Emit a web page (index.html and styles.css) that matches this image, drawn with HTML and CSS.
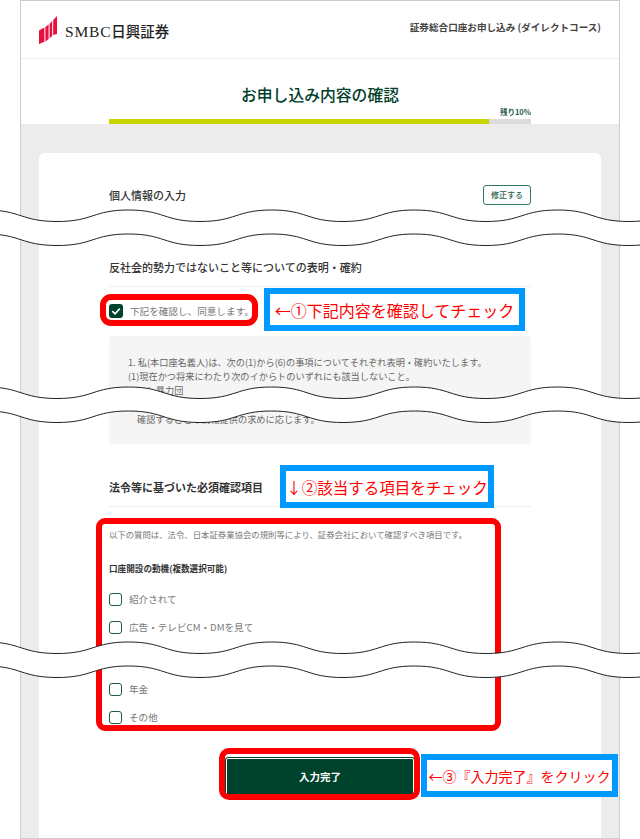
FILE: index.html
```html
<!DOCTYPE html>
<html lang="ja">
<head>
<meta charset="utf-8">
<title>お申し込み内容の確認</title>
<link rel="stylesheet" href="styles.css">
</head>
<body>
<div class="page">
  <div class="frame">
    <header class="site-header">
      <div class="logo">
        <svg class="logo-mark" viewBox="0 0 18 28" width="18" height="28" aria-hidden="true">
          <path fill="#e8103f" d="M0 14.5 L5.4 11.6 V25.8 L0 28 Z"/>
          <path fill="#e8103f" d="M6.4 11 L9.6 8.6 V23 L6.4 25.4 Z"/>
          <path fill="#e8103f" d="M10.6 8 L13.2 5 V20 L10.6 22.4 Z"/>
          <path fill="#e8103f" d="M14.2 4 L18 0 V18 L14.2 19 Z"/>
        </svg>
        <span class="logo-text"><span class="logo-latin">SMBC</span><span class="logo-cjk">日興証券</span></span>
      </div>
      <div class="course">証券総合口座お申し込み (ダイレクトコース)</div>
    </header>

    <section class="title-area">
      <h1 class="page-title">お申し込み内容の確認</h1>
      <div class="progress-wrap">
        <div class="progress-label">残り10%</div>
        <div class="progress"><div class="progress-fill"></div></div>
      </div>
    </section>

    <main class="main">
      <div class="card">
        <div class="row-personal">
          <h2 class="heading">個人情報の入力</h2>
          <button class="edit-btn" type="button">修正する</button>
        </div>

        <h2 class="heading heading-rule heading-second">反社会的勢力ではないこと等についての表明・確約</h2>

        <label class="check-row check-agree">
          <span class="box box-on">
            <svg viewBox="0 0 14 14" width="14" height="14" aria-hidden="true"><path d="M3.3 7.2 L6 9.8 L10.8 4.6" fill="none" stroke="#fff" stroke-width="1.6"/></svg>
          </span>
          <span class="check-label">下記を確認し、同意します。</span>
        </label>

        <div class="terms">
          <p class="terms-line">1. 私(本口座名義人)は、次の(1)から(6)の事項についてそれぞれ表明・確約いたします。</p>
          <p class="terms-line">(1)現在かつ将来にわたり次のイからトのいずれにも該当しないこと。</p>
          <p class="terms-line terms-item">イ. 暴力団</p>
          <p class="terms-line terms-last">確認することの情報提供の求めに応じます。</p>
        </div>

        <h2 class="heading heading-rule heading-third">法令等に基づいた必須確認項目</h2>

        <p class="note">以下の質問は、法令、日本証券業協会の規則等により、証券会社において確認すべき項目です。</p>
        <h3 class="sub-heading">口座開設の動機(複数選択可能)</h3>

        <div class="options">
          <label class="check-row"><span class="box"></span><span class="check-label">紹介されて</span></label>
          <label class="check-row"><span class="box"></span><span class="check-label">広告・テレビCM・DMを見て</span></label>
          <label class="check-row after-break"><span class="box"></span><span class="check-label">年金</span></label>
          <label class="check-row"><span class="box"></span><span class="check-label">その他</span></label>
        </div>

        <div class="submit-row"><button class="submit" type="button">入力完了</button></div>
      </div>
    </main>
  </div>

  <div class="outline outline-agree"></div>
  <div class="outline outline-options"></div>
  <div class="outline outline-submit"></div>

  <div class="callout callout-1">←①下記内容を確認してチェック</div>
  <div class="callout callout-2">↓②該当する項目をチェック</div>
  <div class="callout callout-3">←③『入力完了』をクリック</div>

  <svg class="wave wave-1" viewBox="0 0 640 38" width="640" height="38" aria-hidden="true">
    <path fill="#fff" d="M-14.5 1 C21 1 21 12.5 57 12.5 S93 1 128.5 1 S164 12.5 200 12.5 S236 1 271.5 1 S307 12.5 343 12.5 S379 1 414.5 1 S450 12.5 486 12.5 S522 1 557.5 1 S593 12.5 629 12.5 S665 1 700 1 V25 C665 25 665 36.5 629 36.5 S593 25 557.5 25 S522 36.5 486 36.5 S450 25 414.5 25 S379 36.5 343 36.5 S307 25 271.5 25 S236 36.5 200 36.5 S164 25 128.5 25 S93 36.5 57 36.5 S21 25 -14.5 25 Z"/>
    <path fill="none" stroke="#222" d="M-14.5 1 C21 1 21 12.5 57 12.5 S93 1 128.5 1 S164 12.5 200 12.5 S236 1 271.5 1 S307 12.5 343 12.5 S379 1 414.5 1 S450 12.5 486 12.5 S522 1 557.5 1 S593 12.5 629 12.5 S665 1 700 1"/>
    <path fill="none" stroke="#222" d="M-14.5 25 C21 25 21 36.5 57 36.5 S93 25 128.5 25 S164 36.5 200 36.5 S236 25 271.5 25 S307 36.5 343 36.5 S379 25 414.5 25 S450 36.5 486 36.5 S522 25 557.5 25 S593 36.5 629 36.5 S665 25 700 25"/>
  </svg>
  <svg class="wave wave-2" viewBox="0 0 640 38" width="640" height="38" aria-hidden="true">
    <path fill="#fff" d="M-14.5 1 C21 1 21 12.5 57 12.5 S93 1 128.5 1 S164 12.5 200 12.5 S236 1 271.5 1 S307 12.5 343 12.5 S379 1 414.5 1 S450 12.5 486 12.5 S522 1 557.5 1 S593 12.5 629 12.5 S665 1 700 1 V25 C665 25 665 36.5 629 36.5 S593 25 557.5 25 S522 36.5 486 36.5 S450 25 414.5 25 S379 36.5 343 36.5 S307 25 271.5 25 S236 36.5 200 36.5 S164 25 128.5 25 S93 36.5 57 36.5 S21 25 -14.5 25 Z"/>
    <path fill="none" stroke="#222" d="M-14.5 1 C21 1 21 12.5 57 12.5 S93 1 128.5 1 S164 12.5 200 12.5 S236 1 271.5 1 S307 12.5 343 12.5 S379 1 414.5 1 S450 12.5 486 12.5 S522 1 557.5 1 S593 12.5 629 12.5 S665 1 700 1"/>
    <path fill="none" stroke="#222" d="M-14.5 25 C21 25 21 36.5 57 36.5 S93 25 128.5 25 S164 36.5 200 36.5 S236 25 271.5 25 S307 36.5 343 36.5 S379 25 414.5 25 S450 36.5 486 36.5 S522 25 557.5 25 S593 36.5 629 36.5 S665 25 700 25"/>
  </svg>
  <svg class="wave wave-3" viewBox="0 0 640 38" width="640" height="38" aria-hidden="true">
    <path fill="#fff" d="M-14.5 1 C21 1 21 12.5 57 12.5 S93 1 128.5 1 S164 12.5 200 12.5 S236 1 271.5 1 S307 12.5 343 12.5 S379 1 414.5 1 S450 12.5 486 12.5 S522 1 557.5 1 S593 12.5 629 12.5 S665 1 700 1 V25 C665 25 665 36.5 629 36.5 S593 25 557.5 25 S522 36.5 486 36.5 S450 25 414.5 25 S379 36.5 343 36.5 S307 25 271.5 25 S236 36.5 200 36.5 S164 25 128.5 25 S93 36.5 57 36.5 S21 25 -14.5 25 Z"/>
    <path fill="none" stroke="#222" d="M-14.5 1 C21 1 21 12.5 57 12.5 S93 1 128.5 1 S164 12.5 200 12.5 S236 1 271.5 1 S307 12.5 343 12.5 S379 1 414.5 1 S450 12.5 486 12.5 S522 1 557.5 1 S593 12.5 629 12.5 S665 1 700 1"/>
    <path fill="none" stroke="#222" d="M-14.5 25 C21 25 21 36.5 57 36.5 S93 25 128.5 25 S164 36.5 200 36.5 S236 25 271.5 25 S307 36.5 343 36.5 S379 25 414.5 25 S450 36.5 486 36.5 S522 25 557.5 25 S593 36.5 629 36.5 S665 25 700 25"/>
  </svg>
</div>
</body>
</html>
```
FILE: styles.css
```css
* { box-sizing: border-box; }
html, body { margin: 0; padding: 0; background: #fff; }
body {
  font-family: "Noto Sans CJK JP", "Noto Sans", sans-serif;
  color: #333;
  overflow: hidden;
}
h1, h2, h3, p { margin: 0; }

.page { position: relative; width: 640px; height: 839px; overflow: hidden; }

.frame {
  width: 600px;
  height: 839px;
  margin-left: 20px;
  border: 1px solid #ccc;
  display: flex;
  flex-direction: column;
  background: #fff;
}

.site-header {
  height: 58px;
  flex: none;
  display: flex;
  align-items: center;
  justify-content: space-between;
  padding: 0 18px 0 18px;
  border-bottom: 1px solid #eee;
}
.logo { display: flex; align-items: center; gap: 8px; }
.logo-mark { display: block; }
.logo-text { display: block; font-size: 15px; line-height: 20px; color: #222; white-space: nowrap; margin-top: 4px; }
.logo-latin { font-family: "Liberation Serif", serif; letter-spacing: 0.8px; font-size: 15.5px; }
.logo-cjk { font-weight: 500; font-size: 14.5px; }
.course { font-size: 9.6px; font-weight: 700; color: #444; white-space: nowrap; margin-top: -6px; }

.title-area {
  position: relative;
  height: 65px;
  flex: none;
  padding-top: 25px;
}
.page-title {
  font-size: 15.8px;
  font-weight: 500;
  line-height: 22px;
  text-align: center;
  color: #004028;
}
.progress-wrap { position: absolute; left: 88px; right: 88px; bottom: 0; }
.progress-label { font-size: 7.5px; font-weight: 700; line-height: 10px; text-align: right; color: #2c5a48; margin-bottom: 2px; }
.progress { height: 5px; background: #dcdcdc; }
.progress-fill { width: 90%; height: 100%; background: #c8d400; }

.main {
  flex: 1;
  min-height: 0;
  background: #ececec;
  padding: 29px 18px 0 18px;
}
.card {
  height: 100%;
  background: #fff;
  border-radius: 6px 6px 0 0;
  padding: 32px 70px 0 70px;
}

.heading { font-size: 11px; font-weight: 500; line-height: 16px; color: #333; }
.row-personal { display: flex; align-items: center; justify-content: space-between; height: 20px; }
.edit-btn {
  width: 48px;
  height: 20px;
  padding: 0;
  background: #fff;
  border: 1px solid #2f7a66;
  border-radius: 3px;
  font: 500 8px/18px "Noto Sans CJK JP", sans-serif;
  color: #1f5f4c;
}
.heading-rule { border-bottom: 1px solid #eee; }
.heading-second { margin-top: 54px; padding-bottom: 11px; }

.check-row { display: flex; align-items: center; gap: 7px; height: 14px; }
.box {
  display: block;
  flex: none;
  width: 13px;
  height: 13px;
  border: 1.5px solid #1c5a46;
  border-radius: 3px;
  background: #fff;
}
.box-on { border: 0; width: 14px; height: 14px; background: #00432c; }
.box-on svg { display: block; }
.check-label { font-size: 9.6px; line-height: 14px; color: #777; white-space: nowrap; }
.check-agree { margin-top: 17px; }

.terms {
  margin-top: 18px;
  height: 108px;
  background: #f5f5f5;
  border-radius: 3px;
  padding: 19px 19px 0 19px;
}
.terms-line { font-size: 9.2px; line-height: 14px; color: #666; white-space: nowrap; }
.terms-item { padding-left: 14px; }
.terms-last { margin-top: 15px; padding-left: 9px; }

.heading-third { margin-top: 35px; padding-bottom: 11px; font-weight: 700; }
.note { margin-top: 20px; font-size: 8.4px; line-height: 14px; color: #777; white-space: nowrap; }
.sub-heading { margin-top: 20px; font-size: 8.6px; font-weight: 700; line-height: 14px; color: #333; }
.options { margin-top: 17px; display: flex; flex-direction: column; gap: 14px; }
.after-break { margin-top: 34px; }

.submit-row { display: flex; justify-content: center; margin-top: 33px; padding-left: 0; }
.submit {
  width: 190px;
  height: 41px;
  margin-left: -94px;
  margin-left: 0;
  background: #00432c;
  border: 1px solid #00432c;
  outline: 1px solid #fff;
  outline-offset: -2px;
  border-radius: 3px;
  color: #fff;
  font: 700 10.5px/1 "Noto Sans CJK JP", sans-serif;
}

.outline { position: absolute; border: 6px solid #f00; background: transparent; }
.outline-agree { left: 100px; top: 294px; width: 158px; height: 32px; border-radius: 11px; }
.outline-options { left: 96px; top: 518px; width: 405px; height: 213px; border-radius: 9px; }
.outline-submit { left: 219px; top: 748px; width: 201px; height: 52px; border-radius: 10px; }

.callout {
  position: absolute;
  display: flex;
  align-items: center;
  justify-content: center;
  height: 43px;
  border: 6px solid #0099ff;
  background: #fff;
  color: #f00;
  white-space: nowrap;
  font-family: "Noto Sans CJK JP", sans-serif;
  font-weight: 400;
}
.callout-1 { left: 264px; top: 288px; width: 261px; font-size: 16px; }
.callout-2 { left: 280px; top: 465px; width: 214px; font-size: 15.5px; }
.callout-3 { left: 421px; top: 754px; width: 197px; font-size: 14px; }

.wave { position: absolute; left: 0; display: block; overflow: hidden; }
.wave-1 { top: 208.5px; }
.wave-2 { top: 385.5px; }
.wave-3 { top: 640.5px; }
```
